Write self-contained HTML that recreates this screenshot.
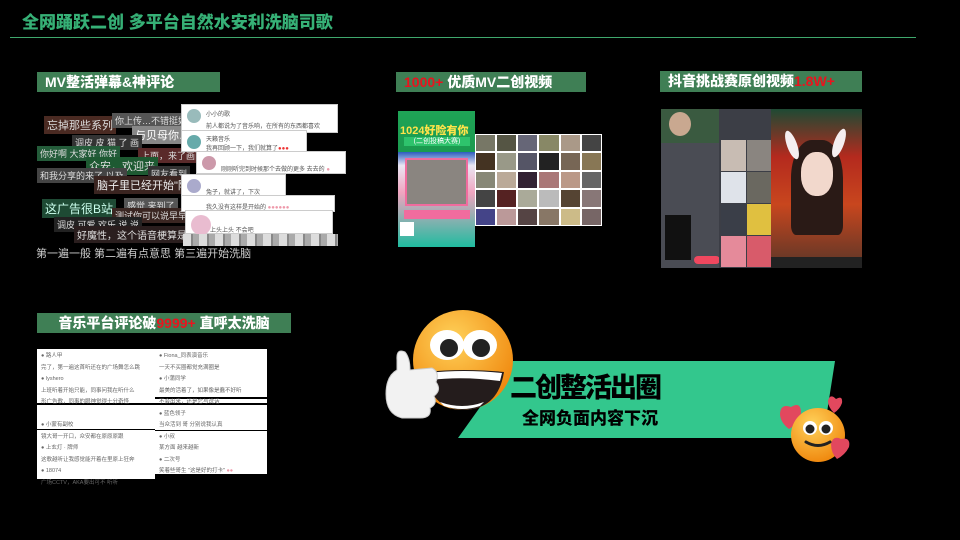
<!DOCTYPE html>
<html><head><meta charset="utf-8"><style>
*{margin:0;padding:0;box-sizing:border-box}
body{width:960px;height:540px;background:#000;position:relative;overflow:hidden;font-family:"Liberation Sans","Noto Sans CJK SC",sans-serif}
.a{position:absolute}
.lbl{position:absolute;background:#3f7f55;color:#fff;font-weight:900;font-size:14px;line-height:20px;padding-left:8px;white-space:nowrap}
.red{color:#e8141e}
.dm{position:absolute;font-size:9px;color:#ddd;white-space:nowrap;padding:1px 3px;background:rgba(60,40,30,.7)}
.card{position:absolute;background:#fff;border:1px solid #ccc}
.card .av{position:absolute;left:5px;top:4px;width:14px;height:14px;border-radius:50%;background:#9bb}
.card .t{position:absolute;left:24px;font-size:6px;color:#555;white-space:nowrap}
.g{display:grid;position:absolute}
.g div{border:1px solid #fff}
</style></head><body>
<div class="a" style="left:22px;top:8px;font-size:17px;font-weight:900;color:#36b076">全网踊跃二创 多平台自然水安利洗脑司歌</div>
<div class="a" style="left:10px;top:37px;width:906px;height:1px;background:#3fa86d"></div>

<div class="lbl" style="left:37px;top:72px;width:183px">MV整活弹幕&amp;神评论</div>
<div class="lbl" style="left:396px;top:72px;width:190px"><span class="red">1000+</span> 优质MV二创视频</div>
<div class="lbl" style="left:660px;top:71px;width:202px;height:21px">抖音挑战赛原创视频<span class="red">1.8W+</span></div>
<div class="lbl" style="left:37px;top:313px;width:254px;text-align:center;padding:0">音乐平台评论破<span class="red">9999+</span> 直呼太洗脑</div>

<!-- danmaku -->
<div class="dm" style="left:44px;top:116px;font-size:11px;background:#4a2a22">忘掉那些系列</div>
<div class="dm" style="left:112px;top:113px;background:#555">你上传…不错挺好 …就是</div>
<div class="dm" style="left:132px;top:126px;background:#888;font-size:11px;color:#fff">与贝母你…</div>
<div class="dm" style="left:72px;top:135px;background:#333">调皮 皮 猫 了 画</div>
<div class="dm" style="left:37px;top:146px;background:#245c3a">你好啊 大家好 你好</div>
<div class="dm" style="left:138px;top:148px;background:#5a2a2a">上面，来了画面</div>
<div class="dm" style="left:86px;top:157px;background:#1e5a32;font-size:11px">众安，欢迎来</div>
<div class="dm" style="left:37px;top:168px;background:#444">和我分享的来了 以及</div>
<div class="dm" style="left:148px;top:166px;background:#333">网友看到</div>
<div class="dm" style="left:94px;top:176px;background:#3a2420;font-size:11px;color:#eee">脑子里已经开始"险险险"</div>
<div class="dm" style="left:42px;top:199px;background:#1e4a34;font-size:12px;color:#cfe">这广告很B站</div>
<div class="dm" style="left:124px;top:198px;background:#555">感觉 来到了</div>
<div class="dm" style="left:112px;top:208px;background:#3a2622">测试你可以说早早上的 书上保</div>
<div class="dm" style="left:54px;top:217px;background:#222">调皮 可爱 欢乐 说 说</div>
<div class="dm" style="left:74px;top:226px;background:#2a1e1e;font-size:10px">好魔性，这个语音梗算是玩明白了</div>
<div class="a" style="left:36px;top:245px;font-size:11px;color:#ccc;white-space:nowrap">第一遍一般 第二遍有点意思 第三遍开始洗脑</div>
<!-- comment cards -->
<div class="card" style="left:181px;top:104px;width:157px;height:29px"><div class="av"></div><div class="t" style="top:4px">小小的歌</div><div class="t" style="top:16px">前人都说为了音乐响，在所有的东西都喜欢</div></div>
<div class="card" style="left:181px;top:130px;width:126px;height:22px"><div class="av" style="background:#6aa"></div><div class="t" style="top:3px">天籁音乐</div><div class="t" style="top:12px">我再回顾一下，我们就算了<span style="color:#e33">●●●</span></div></div>
<div class="card" style="left:196px;top:151px;width:150px;height:23px"><div class="av" style="background:#c9a"></div><div class="t" style="top:12px">刚刚听完到时候那个去做的更多 去去的 <span style="color:#e9a">●</span></div></div>
<div class="card" style="left:181px;top:174px;width:105px;height:22px"><div class="av" style="background:#aac"></div><div class="t" style="top:12px">兔子，就讲了，下次</div></div>
<div class="card" style="left:181px;top:195px;width:154px;height:17px"><div class="t" style="top:6px">我久没有这样是开始的 <span style="color:#e9a">●●●●●●</span></div></div>
<div class="card" style="left:185px;top:210px;width:148px;height:24px"><div class="av" style="background:#e9bcd0;width:20px;height:20px"></div><div class="t" style="top:14px">上头上头 不会吧</div></div>
<div class="a" style="left:183px;top:234px;width:155px;height:12px;background:repeating-linear-gradient(90deg,#ddd 0 8px,#888 8px 10px,#aaa 10px 16px)"></div>

<!-- poster -->
<div class="a" style="left:398px;top:111px;width:77px;height:136px;background:linear-gradient(#1fa456,#1b9a4f 30%,#2a5bbd 30%,#e9e6f3 40%,#f0a5c0 60%,#1fbca0 100%)"></div>
<div class="a" style="left:400px;top:122px;font-size:11px;font-weight:900;color:#ffe34a">1024好险有你</div>
<div class="a" style="left:404px;top:137px;width:66px;height:9px;background:#2ec36c;font-size:7px;color:#fff;text-align:center;line-height:9px">(二创投稿大赛)</div>
<div class="a" style="left:405px;top:158px;width:63px;height:48px;background:#8a8580;border:2px solid #f06c9e"></div>
<div class="a" style="left:404px;top:210px;width:66px;height:9px;background:#f06c9e"></div>
<div class="a" style="left:400px;top:222px;width:14px;height:14px;background:#fff"></div>
<div class="g" style="left:475px;top:134px;width:127px;height:92px;grid-template-columns:repeat(6,1fr);grid-template-rows:repeat(5,1fr);background:#333">
<div style="background:#776"></div><div style="background:#554"></div><div style="background:#667"></div><div style="background:#886"></div><div style="background:#a98"></div><div style="background:#444"></div>
<div style="background:#432"></div><div style="background:#998"></div><div style="background:#556"></div><div style="background:#222"></div><div style="background:#765"></div><div style="background:#875"></div>
<div style="background:#887"></div><div style="background:#ba9"></div><div style="background:#323"></div><div style="background:#a77"></div><div style="background:#b98"></div><div style="background:#666"></div>
<div style="background:#444"></div><div style="background:#522"></div><div style="background:#aa9"></div><div style="background:#bbb"></div><div style="background:#543"></div><div style="background:#877"></div>
<div style="background:#448"></div><div style="background:#b99"></div><div style="background:#544"></div><div style="background:#876"></div><div style="background:#cb8"></div><div style="background:#766"></div>
</div>

<!-- douyin -->
<div class="a" style="left:661px;top:109px;width:58px;height:159px;background:#4a4c54"></div>
<div class="a" style="left:661px;top:109px;width:58px;height:34px;background:#3a5a40"></div>
<div class="a" style="left:669px;top:112px;width:22px;height:24px;border-radius:50%;background:#c9a890"></div>
<div class="a" style="left:665px;top:215px;width:26px;height:45px;background:#111"></div>
<div class="a" style="left:694px;top:256px;width:26px;height:8px;border-radius:4px;background:#f0485f"></div>
<div class="a" style="left:719px;top:109px;width:52px;height:159px;background:#3c3e46"></div>
<div class="g" style="left:721px;top:140px;width:50px;height:127px;grid-template-columns:1fr 1fr;grid-template-rows:repeat(4,1fr);gap:1px">
<div style="border:0;background:#c8bcb3"></div><div style="border:0;background:#8a8580"></div><div style="border:0;background:#dfe3ea"></div><div style="border:0;background:#6a6860"></div><div style="border:0;background:#3a3e48"></div><div style="border:0;background:#e0c040"></div><div style="border:0;background:#e58a9a"></div><div style="border:0;background:#d85b6a"></div></div>
<div class="a" style="left:771px;top:109px;width:91px;height:159px;background:linear-gradient(#1e4a34,#b42a1e 30%,#c8461e 60%,#5a3628)"></div>
<div class="a" style="left:791px;top:140px;width:52px;height:95px;border-radius:40% 40% 10% 10%;background:#2a1a16"></div>
<div class="a" style="left:801px;top:152px;width:32px;height:44px;border-radius:45%;background:#f2d8cc"></div>
<div class="a" style="left:787px;top:130px;width:10px;height:30px;border-radius:50%;background:#f5eef0;transform:rotate(-20deg)"></div>
<div class="a" style="left:834px;top:128px;width:10px;height:30px;border-radius:50%;background:#f5eef0;transform:rotate(20deg)"></div>
<div class="a" style="left:771px;top:257px;width:91px;height:11px;background:#222"></div>

<!-- music comments -->
<div class="a" style="left:37px;top:349px;width:118px;height:130px;background:#fff"></div>
<div class="a" style="left:155px;top:349px;width:112px;height:125px;background:#fff"></div>
<div class="a" style="left:37px;top:403px;width:230px;height:2px;background:#000"></div>
<div class="a" style="left:37px;top:429px;width:118px;height:1px;background:#000"></div>
<div class="a" style="left:155px;top:397px;width:112px;height:2px;background:#000"></div>
<div class="a" style="left:155px;top:430px;width:112px;height:1px;background:#000"></div>
<div class="a" style="left:41px;top:351px;width:112px;overflow:hidden;font-size:5.5px;color:#666;line-height:11.5px;white-space:nowrap">● 路人甲<br>完了，第一遍这首听还在的广场舞怎么跳<br>● lyshero<br>上班听着开始只能，同事问我在听什么<br>形广告歌，同事的眼神觉得十分奇怪<br><br>● 小蒙有副校<br>镜大哥一开口，众安都在原原原跟<br>● 上玄灯 · 牌师<br>这歌越听让我感觉能开着在里原上狂奔<br>● 18074<br>广场CCTV，AKA要出可不 听听</div>
<div class="a" style="left:159px;top:351px;width:106px;overflow:hidden;font-size:5.5px;color:#666;line-height:11.5px;white-space:nowrap">● Fiona_同表演音乐<br>一天不买圈都觉充满圈是<br>● 小蒲同学<br>最美的活着了，如果像是蠢不好听<br>不会出来，还是它与说话<br>● 蓝色领子<br>当众活到 哥 分别说我认真<br>● 小叔<br>某方面 越来越新<br>● 二次号<br>笑着些哥生 "这是好的打卡" <span style="color:#e9a">●●</span></div>

<!-- banner -->
<svg class="a" style="left:0;top:0" width="960" height="540"><polygon points="513,361 835,361 823,438 458,438" fill="#33c78d"/></svg>
<div class="a" style="left:510px;top:366px;font-size:27px;font-weight:900;color:#000;letter-spacing:-2px;white-space:nowrap">二创整活出圈</div>
<div class="a" style="left:522px;top:404px;font-size:17px;font-weight:900;color:#000;white-space:nowrap">全网负面内容下沉</div>

<!-- big emoji -->
<svg class="a" style="left:380px;top:310px" width="140" height="120">
<defs><radialGradient id="f" cx="40%" cy="30%" r="70%"><stop offset="0" stop-color="#ffd25a"/><stop offset="1" stop-color="#f0890f"/></radialGradient></defs>
<circle cx="83" cy="50" r="50" fill="url(#f)"/>
<ellipse cx="67" cy="35" rx="17" ry="15" fill="#fff"/><ellipse cx="100" cy="35" rx="17" ry="15" fill="#fff"/>
<circle cx="69" cy="38" r="9" fill="#222"/><circle cx="101" cy="38" r="9" fill="#222"/>
<path d="M46 62 Q83 58 124 62 Q118 100 82 100 Q50 98 46 62Z" fill="#241c1c"/>
<path d="M48 63 Q83 59 122 63 L120 71 Q83 66 50 70Z" fill="#fff"/>
<path d="M60 92 Q82 100 104 92 L100 96 Q82 102 64 96Z" fill="#fff"/>
<path d="M17 50 Q16 38 25 42 Q30 48 30 60 L52 58 Q60 62 56 72 Q62 80 54 86 Q58 94 50 98 Q52 108 40 108 L22 108 Q6 104 6 84 Q6 66 17 60Z" fill="#f2f2f2" stroke="#ccc"/>
</svg>
<!-- small emoji -->
<svg class="a" style="left:775px;top:395px" width="80" height="75">
<defs><radialGradient id="f2" cx="40%" cy="30%" r="70%"><stop offset="0" stop-color="#ffd25a"/><stop offset="1" stop-color="#f08a10"/></radialGradient></defs>
<path d="M5 20 Q5 8 16 12 Q26 6 26 18 Q24 28 14 34 Q6 28 5 20Z" fill="#e2485e"/>
<path d="M53 6 Q55 -2 61 4 Q68 0 67 8 Q65 14 59 18 Q53 12 53 6Z" fill="#e2485e"/>
<circle cx="43" cy="40" r="27" fill="url(#f2)"/>
<circle cx="35" cy="33" r="7" fill="#fff"/><circle cx="51" cy="33" r="7" fill="#fff"/>
<circle cx="35" cy="34" r="4.5" fill="#222"/><circle cx="51" cy="34" r="4.5" fill="#222"/>
<path d="M31 47 Q43 54 55 47" stroke="#222" stroke-width="3" fill="none" stroke-linecap="round"/>
<path d="M56 49 Q58 40 66 44 Q76 42 74 52 Q70 60 62 64 Q56 58 56 49Z" fill="#e2485e"/>
</svg>
</body></html>
